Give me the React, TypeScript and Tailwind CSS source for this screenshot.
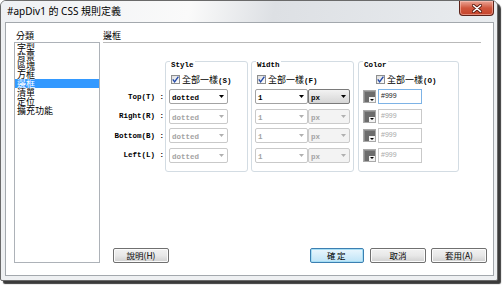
import React from 'react';

const CJK = /[\u3000-\u9fff\uff00-\uffef]/;

function Mixed({ text, dim }: { text: string; dim?: boolean }) {
  const runs: { s: string; cjk: boolean }[] = [];
  for (const ch of text) {
    const c = CJK.test(ch);
    const last = runs[runs.length - 1];
    if (last && last.cjk === c) last.s += ch;
    else runs.push({ s: ch, cjk: c });
  }
  return (
    <span className={dim ? 'whitespace-pre text-[#a3a3a3]' : 'whitespace-pre text-black'}>
      {runs.map((r, i) =>
        r.cjk ? (
          <span key={i} className="font-['Noto_Sans_CJK_TC',sans-serif] text-[9px]">
            {r.s}
          </span>
        ) : (
          <span key={i} className="font-['Liberation_Mono',monospace] font-bold text-[7.5px]">
            {r.s}
          </span>
        )
      )}
    </span>
  );
}

function Arrow({ dim }: { dim?: boolean }) {
  return (
    <svg width="5" height="3" viewBox="0 0 5 3">
      <path d="M0 0h5L2.5 3z" fill={dim ? '#b0b0b0' : '#000'} />
    </svg>
  );
}

function Check({ label }: { label: string }) {
  return (
    <div className="flex items-center gap-[2px] h-[13px]">
      <span className="w-[9px] h-[9px] border border-[#8e8f8f] bg-gradient-to-br from-[#dedede] to-white flex items-center justify-center">
        <svg width="7" height="7" viewBox="0 0 7 7">
          <path d="M0.8 3.4L2.6 5.8L6.4 0.6" stroke="#2349a8" strokeWidth="1.4" fill="none" />
        </svg>
      </span>
      <span className="leading-[13px]">
        <Mixed text={label} />
      </span>
    </div>
  );
}

// combo box
function Combo({
  value,
  w,
  dim,
  gray,
}: {
  value: string;
  w: string;
  dim?: boolean;
  gray?: boolean;
}) {
  const box = gray
    ? dim
      ? 'border-[#cbcbcb] bg-[#f3f3f3]'
      : 'border-[#7a7a7a] bg-gradient-to-b from-[#f2f2f2] to-[#d6d6d6]'
    : dim
      ? 'border-[#c9c9c9] bg-white'
      : 'border-[#a3a3a3] bg-white';
  return (
    <div className={`${w} h-[15px] rounded-[2px] border ${box} flex items-center justify-between pl-[2px] pr-[3px]`}>
      <span className="leading-[13px]">
        <Mixed text={value} dim={dim} />
      </span>
      <Arrow dim={dim} />
    </div>
  );
}

function ColorRow({ active }: { active?: boolean }) {
  return (
    <div className="h-[15px] flex items-center">
      <span className="relative w-[13px] h-[13px] border border-[#a9a9a9] bg-[#6c6c6c] shadow-[inset_1px_1px_0_#8c8c8c]">
        <span className="absolute right-0 bottom-0 w-[6px] h-[5px] bg-[#f2f2f2] flex items-center justify-center">
          <svg width="4" height="2" viewBox="0 0 4 2">
            <path d="M0 0h4L2 2z" fill="#000" />
          </svg>
        </span>
      </span>
      <div
        className={
          active
            ? 'ml-[2px] w-[44px] h-[15px] border border-[#7db3e6] bg-white flex items-center pl-[2px] text-[7px] text-[#222] font-["Liberation_Sans",sans-serif]'
            : 'ml-[2px] w-[44px] h-[15px] border border-[#c9c9c9] bg-white flex items-center pl-[2px] text-[7px] text-[#a8a8a8] font-["Liberation_Sans",sans-serif]'
        }
      >
        #999
      </div>
    </div>
  );
}

function Group({ legend, w, children }: { legend: string; w: string; children: React.ReactNode }) {
  return (
    <div className={`${w} h-[111px] rounded-[3px] border border-[#d3dce3] flex flex-col`}>
      <span className="-mt-[5px] ml-[4px] px-[1px] w-fit bg-white leading-[9px]">
        <Mixed text={legend} />
      </span>
      {children}
    </div>
  );
}

function Btn({ label, w, primary }: { label: string; w: string; primary?: boolean }) {
  return (
    <div
      className={
        primary
          ? `${w} h-[15px] rounded-[2px] border border-[#3c7fb1] shadow-[inset_0_0_0_1px_#a6def5] bg-gradient-to-b from-[#eaf6fd] to-[#bfe4f7] flex items-center justify-center text-[8.5px] tracking-[1.5px] font-['Noto_Sans_CJK_TC',sans-serif] text-black`
          : `${w} h-[15px] rounded-[2px] border border-[#707070] shadow-[inset_0_0_0_1px_#fbfbfb] bg-gradient-to-b from-[#f2f2f2] via-[#e8e8e8] to-[#d0d0d0] flex items-center justify-center text-[8.5px] font-['Noto_Sans_CJK_TC',sans-serif] text-black`
      }
    >
      {label}
    </div>
  );
}

const categories = ['字型', '背景', '區塊', '方框', '邊框', '清單', '定位', '擴充功能'];
const sides = ['Top(T) :', 'Right(R) :', 'Bottom(B) :', 'Left(L) :'];

export default function App() {
  return (
    <div className="w-[504px] h-[285px] bg-white overflow-hidden">
      <div className="w-[498px] h-[281px] rounded-t-[6px] rounded-b-[2px] border border-[#6a6a6a] bg-[#eef0f2] shadow-[3px_3px_1px_#3a3a3a] flex flex-col">
        {/* title bar */}
        <div className="h-[21px] rounded-t-[5px] flex items-start justify-between bg-[linear-gradient(100deg,#eef0f3_0%,#fafafa_38%,#dde0e4_55%,#e9ecef_100%)]">
          <span className="pl-[6px] pt-[4px] leading-[13px] text-[10px] text-black font-['Noto_Sans','Noto_Sans_CJK_TC',sans-serif]">
            #apDiv1 的 CSS 規則定義
          </span>
          <div className="mr-[3px] w-[35px] h-[15px] rounded-b-[4px] border border-t-0 border-[#5c2219] bg-gradient-to-b from-[#eaa596] via-[#d0563d] to-[#c5432b] shadow-[inset_0_0_0_1px_rgba(255,210,200,0.5)] flex items-center justify-center">
            <svg width="10" height="9" viewBox="0 0 10 9">
              <path d="M1.5 1.5L8.5 7.5M8.5 1.5L1.5 7.5" stroke="#5a1a10" strokeWidth="3.2" strokeLinecap="round" />
              <path d="M1.5 1.5L8.5 7.5M8.5 1.5L1.5 7.5" stroke="#fff" strokeWidth="1.6" strokeLinecap="round" />
            </svg>
          </div>
        </div>

        {/* client area */}
        <div className="ml-[4px] mr-[3px] h-[254px] border border-[#a3a8ad] bg-white flex pt-[6px] pb-[12px]">
          {/* categories */}
          <div className="ml-[8px] w-[86px] flex flex-col">
            <div className="h-[13px] pl-[2px] leading-[13px] text-[9px] text-black font-['Noto_Sans_CJK_TC',sans-serif]">
              分類
            </div>
            <div className="flex-1 border border-[#adb2b8] bg-white">
              {categories.map((c, i) => (
                <div
                  key={c}
                  className={
                    i === 4
                      ? 'h-[9px] pl-[2px] leading-[9px] text-[9px] bg-[#3399ff] text-white font-["Noto_Sans_CJK_TC",sans-serif]'
                      : 'h-[9px] pl-[2px] leading-[9px] text-[9px] text-black font-["Noto_Sans_CJK_TC",sans-serif]'
                  }
                >
                  {c}
                </div>
              ))}
            </div>
          </div>

          {/* border panel */}
          <div className="ml-[3px] w-[384px] flex flex-col">
            <div className="h-[14px] mr-[6px] border-b border-[#b9b9b9] leading-[13px] text-[9px] text-black font-['Noto_Sans_CJK_TC',sans-serif]">
              邊框
            </div>

            <div className="mt-[18px] flex items-start">
              <div className="w-[62px] pt-[24px] pr-[1px] flex flex-col gap-[4.5px]">
                {sides.map((s) => (
                  <div key={s} className="h-[15px] flex items-center justify-end">
                    <Mixed text={s} />
                  </div>
                ))}
              </div>

              <Group legend="Style" w="w-[83px]">
                <div className="mt-[3px] ml-[5px]">
                  <Check label="全部一樣(S)" />
                </div>
                <div className="mt-[3px] pl-[3px] flex flex-col gap-[4.5px]">
                  <Combo value="dotted" w="w-[59px]" />
                  <Combo value="dotted" w="w-[59px]" dim />
                  <Combo value="dotted" w="w-[59px]" dim />
                  <Combo value="dotted" w="w-[59px]" dim />
                </div>
              </Group>

              <div className="ml-[3px]">
                <Group legend="Width" w="w-[103px]">
                  <div className="mt-[3px] ml-[5px]">
                    <Check label="全部一樣(F)" />
                  </div>
                  <div className="mt-[3px] pl-[3px] flex flex-col gap-[4.5px]">
                    {[0, 1, 2, 3].map((i) => (
                      <div key={i} className="flex">
                        <Combo value="1" w="w-[53px]" dim={i > 0} />
                        <Combo value="px" w="w-[42px]" dim={i > 0} gray />
                      </div>
                    ))}
                  </div>
                </Group>
              </div>

              <div className="ml-[4px]">
                <Group legend="Color" w="w-[101px]">
                  <div className="mt-[3px] ml-[17px]">
                    <Check label="全部一樣(O)" />
                  </div>
                  <div className="mt-[3px] pl-[4px] flex flex-col gap-[4.5px]">
                    <ColorRow active />
                    <ColorRow />
                    <ColorRow />
                    <ColorRow />
                  </div>
                </Group>
              </div>
            </div>

            {/* buttons */}
            <div className="mt-auto flex items-center">
              <div className="ml-[10px]">
                <Btn label="說明(H)" w="w-[56px]" />
              </div>
              <div className="ml-auto">
                <Btn label="確定" w="w-[54px]" primary />
              </div>
              <div className="ml-[6px]">
                <Btn label="取消" w="w-[56px]" />
              </div>
              <div className="ml-[5px]">
                <Btn label="套用(A)" w="w-[56px]" />
              </div>
            </div>
          </div>
        </div>
      </div>
    </div>
  );
}
